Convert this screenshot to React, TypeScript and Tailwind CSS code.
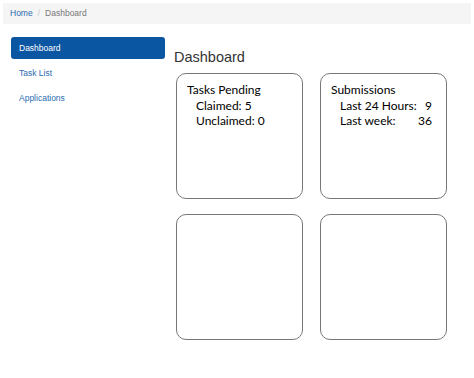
import React from 'react';

const navItems = ['Dashboard', 'Task List', 'Applications'];

function Card({ children }: { children?: React.ReactNode }) {
  return (
    <div className="h-[126px] w-[127px] rounded-[10px] border border-[#777777] pl-[10px] pt-[8px] text-[12px] leading-[15.5px] text-black">
      {children}
    </div>
  );
}

export default function App() {
  return (
    <div className="h-[378px] w-[474px] bg-white pt-[3px] font-['Liberation_Sans',Arial,sans-serif]">
      <div className="mx-[3px] flex h-[21px] items-center bg-[#f5f5f5] pl-[7px] text-[8.5px]">
        <a className="text-[#2a6cb0]">Home</a>
        <span className="px-[5px] text-[#cccccc]">/</span>
        <span className="text-[#777777]">Dashboard</span>
      </div>

      <div className="flex">
        <nav className="ml-[11px] mt-[13px] flex w-[154px] flex-col gap-[3px]">
          {navItems.map((item, i) => (
            <div
              key={item}
              className={`flex h-[22px] items-center rounded-[3px] pl-[8px] text-[8.5px] ${
                i === 0 ? 'bg-[#0b56a3] text-white' : 'text-[#2a6cb0]'
              }`}
            >
              {item}
            </div>
          ))}
        </nav>

        <main className="ml-[9px] mt-[23px]">
          <h1 className="text-[14.5px] leading-[20px] text-[#333333]">Dashboard</h1>
          <div className="ml-[2px] mt-[6px] grid grid-cols-[127px_127px] gap-x-[17px] gap-y-[15px] font-['Lato',sans-serif]">
            <Card>
              <div>Tasks Pending</div>
              <div className="pl-[9px]">
                <div>Claimed: 5</div>
                <div>Unclaimed: 0</div>
              </div>
            </Card>
            <Card>
              <div>Submissions</div>
              <div className="w-[101px] pl-[9px]">
                <div className="flex justify-between">
                  <span>Last 24 Hours:</span>
                  <span>9</span>
                </div>
                <div className="flex justify-between">
                  <span>Last week:</span>
                  <span>36</span>
                </div>
              </div>
            </Card>
            <Card />
            <Card />
          </div>
        </main>
      </div>
    </div>
  );
}
